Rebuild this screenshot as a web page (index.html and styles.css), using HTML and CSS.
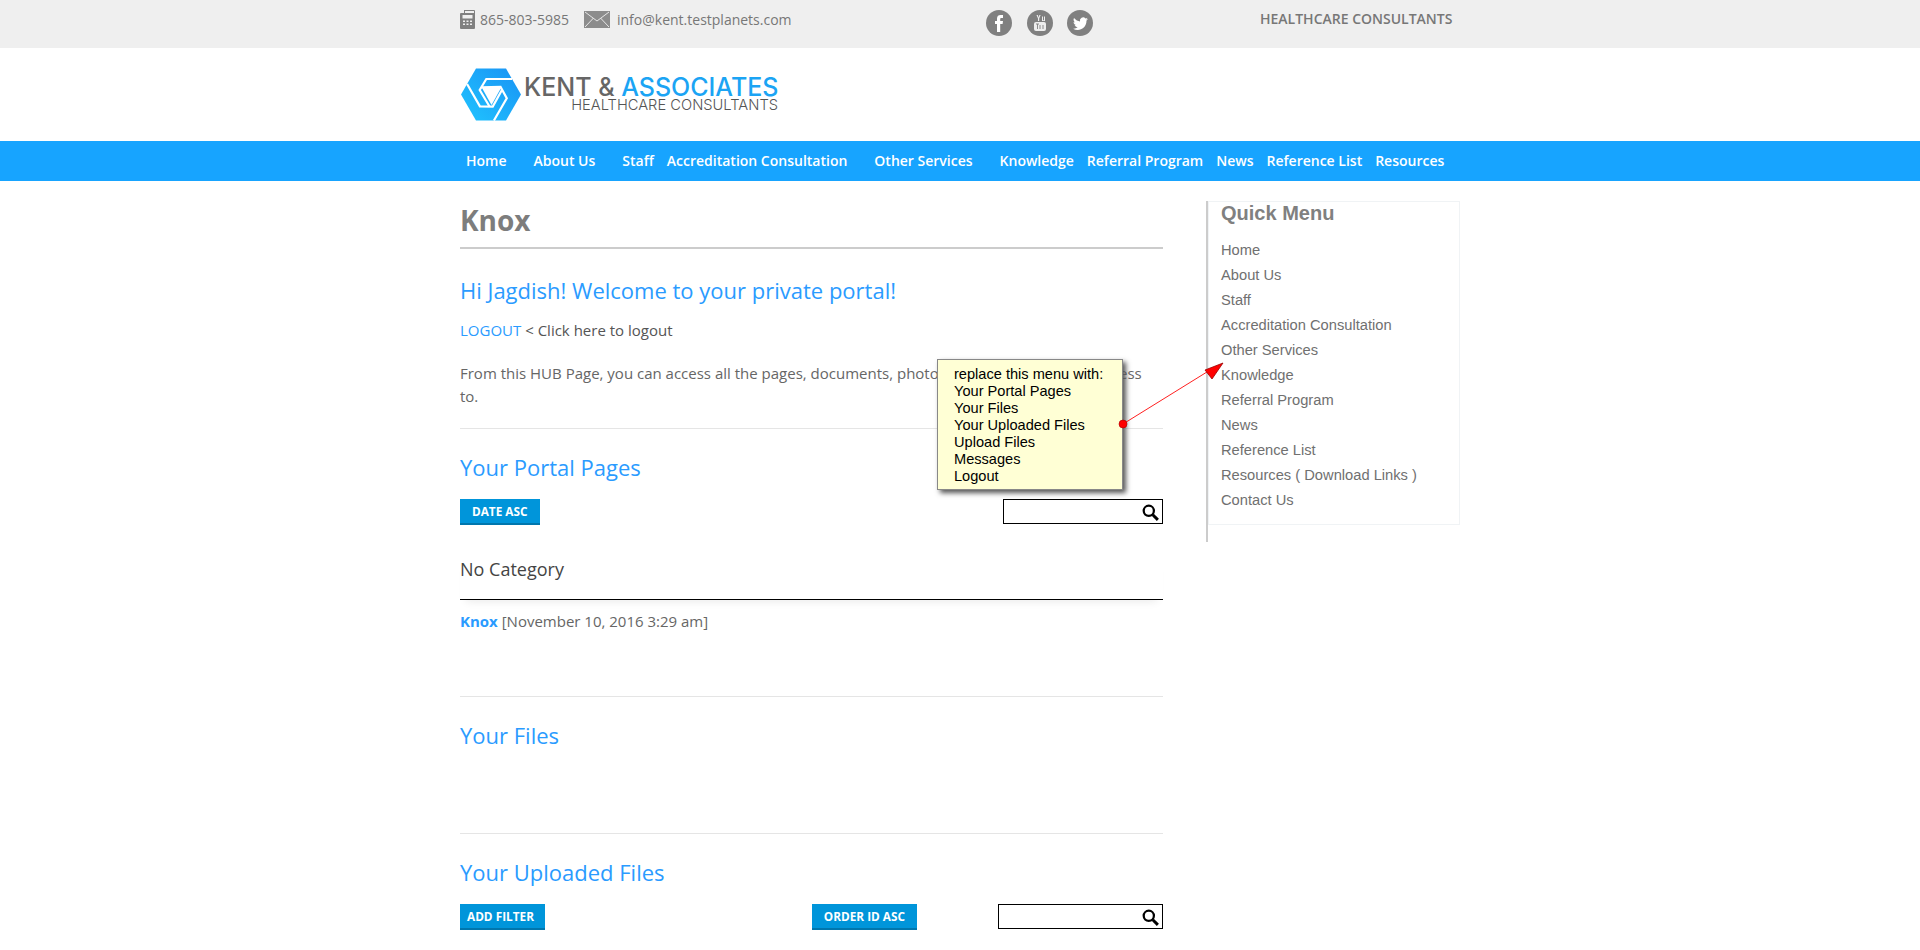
FILE: index.html
```html
<!DOCTYPE html>
<html lang="en">
<head>
<meta charset="utf-8">
<title>Knox - Kent &amp; Associates</title>
<link rel="stylesheet" href="styles.css">
</head>
<body>
<header class="topbar">
  <div class="wrap topbar-in">
    <div class="contact">
      <svg class="ic-phone" viewBox="0 0 15 19"><path fill="#808080" fill-rule="evenodd" d="M1 3h3V0h10a1 1 0 0 1 1 1v17a1 1 0 0 1-1 1H1a1 1 0 0 1-1-1V4a1 1 0 0 1 1-1zM5 1v2h9V1zM2.500 5v3.500h10V5zM3 10.500v1.500h2v-1.500zM6.500 10.500v1.500h2v-1.500zM10 10.500v1.500h2v-1.500zM3 13.500v1.500h2v-1.500zM6.500 13.500v1.500h2v-1.500zM10 13.500v1.500h2v-1.500z"/></svg>
      <span class="phone">865-803-5985</span>
      <svg class="ic-mail" viewBox="0 0 26 17"><rect width="26" height="17" fill="#8c8c8c"/><path d="M1 1l12 9 12-9M1 16l8.500-9M25 16l-8.500-9" fill="none" stroke="#e6e6e6" stroke-width="1"/></svg>
      <span class="mail">info@kent.testplanets.com</span>
    </div>
    <div class="social">
      <span class="soc"><svg viewBox="0 0 26 26"><circle cx="13" cy="13" r="13" fill="#808080"/><path fill="#fff" d="M11 22v-8H9v-3h2V8.500C11 6 12.500 5 14.500 5H17v3h-1.500c-1 0-1.300.4-1.300 1.200V11H17l-.4 3h-2.400v8z"/></svg></span>
      <span class="soc"><svg viewBox="0 0 26 26"><circle cx="13" cy="13" r="13" fill="#808080"/><path fill="#eee" d="M9.500 5h1.300l.8 2.500.8-2.500h1.200l-1.400 3.500V11h-1.200V8.500zM15 6.500h1v3.700h1v-3.700h1V11h-3z"/><rect x="7" y="12" width="12" height="9" rx="2" fill="#eee"/><path d="M9 14h3M10.500 14v5M13 15v4M16 15v4" stroke="#808080" stroke-width=".9"/></svg></span>
      <span class="soc"><svg viewBox="0 0 26 26"><circle cx="13" cy="13" r="13" fill="#808080"/><path fill="#fff" d="M21 9c-.6.300-1.200.4-1.900.5.700-.4 1.200-1 1.400-1.800-.6.400-1.300.7-2 .8a3.200 3.200 0 0 0-5.500 2.900C11 11.300 8.600 10 7 8c-.9 1.500-.4 3.400 1 4.300-.5 0-1-.1-1.400-.4 0 1.600 1.100 2.900 2.500 3.200-.5.100-1 .1-1.400 0 .4 1.300 1.600 2.200 3 2.200A6.400 6.400 0 0 1 6 18.700c5.500 3.100 13.500.4 13.500-8.100 0-.2 1-.8 1.500-1.600z"/></svg></span>
    </div>
    <div class="tagline">HEALTHCARE CONSULTANTS</div>
  </div>
</header>

<div class="brand">
  <div class="wrap brand-in">
    <svg class="logo-mark" viewBox="0 0 60 53">
      <defs>
        <linearGradient id="lg" x1="0" y1="1" x2="1" y2="0"><stop offset="0" stop-color="#1fc4ff"/><stop offset="1" stop-color="#1a92f4"/></linearGradient>
        <path id="swirl" d="M51 11H25.300L18.700 22l10 16.700" fill="none" stroke="#fff" stroke-width="2.200"/>
      </defs>
      <path fill="url(#lg)" d="M15 .5h30l15 26-15 26H15L0 26.500z"/>
      <path fill="#fff" d="M21 20h19l-9.500 17z"/>
      <use href="#swirl"/>
      <use href="#swirl" transform="rotate(120 30 26.500)"/>
      <use href="#swirl" transform="rotate(240 30 26.500)"/>
    </svg>
    <div class="logo-text">
      <div class="logo-name">KENT &amp; <span class="logo-accent">ASSOCIATES</span></div>
      <div class="logo-sub">HEALTHCARE CONSULTANTS</div>
    </div>
  </div>
</div>

<nav class="nav">
  <div class="wrap nav-in">
    <a class="nav-link wide">Home</a>
    <a class="nav-link wide">About Us</a>
    <a class="nav-link">Staff</a>
    <a class="nav-link wide">Accreditation Consultation</a>
    <a class="nav-link wide">Other Services</a>
    <a class="nav-link">Knowledge</a>
    <a class="nav-link">Referral Program</a>
    <a class="nav-link">News</a>
    <a class="nav-link">Reference List</a>
    <a class="nav-link">Resources</a>
  </div>
</nav>

<div class="wrap page">
  <main class="main">
    <h1 class="title">Knox</h1>
    <h2 class="welcome">Hi Jagdish! Welcome to your private portal!</h2>
    <p class="logout"><a class="link">LOGOUT</a> &lt; Click here to logout</p>
    <p class="intro">From this HUB Page, you can access all the pages, documents, photos and videos you have access to.</p>

    <section class="sec sec-pages">
      <h3 class="sec-title">Your Portal Pages</h3>
      <div class="tools">
        <a class="btn">DATE ASC</a>
        <div class="search s160"><svg class="mag" viewBox="0 0 15 15"><circle cx="6" cy="6" r="4.500" fill="none" stroke="#000" stroke-width="2"/><path d="M9.500 9.500L14 14" stroke="#000" stroke-width="2.600"/></svg></div>
      </div>
      <div class="cat">No Category</div>
      <p class="item"><a class="link strong">Knox</a> [November 10, 2016 3:29 am]</p>
    </section>

    <section class="sec sec-files">
      <h3 class="sec-title">Your Files</h3>
    </section>

    <section class="sec sec-up">
      <h3 class="sec-title">Your Uploaded Files</h3>
      <div class="tools">
        <a class="btn btn-add">ADD FILTER</a>
        <a class="btn push">ORDER ID ASC</a>
        <div class="search s165"><svg class="mag" viewBox="0 0 15 15"><circle cx="6" cy="6" r="4.500" fill="none" stroke="#000" stroke-width="2"/><path d="M9.500 9.500L14 14" stroke="#000" stroke-width="2.600"/></svg></div>
      </div>
    </section>
  </main>

  <aside class="side">
    <div class="side-box">
      <h4 class="side-title">Quick Menu</h4>
      <ul class="side-list">
        <li>Home</li>
        <li>About Us</li>
        <li>Staff</li>
        <li>Accreditation Consultation</li>
        <li>Other Services</li>
        <li>Knowledge</li>
        <li>Referral Program</li>
        <li>News</li>
        <li>Reference List</li>
        <li>Resources ( Download Links )</li>
        <li>Contact Us</li>
      </ul>
    </div>
  </aside>

  <div class="note">replace this menu with:<br>Your Portal Pages<br>Your Files<br>Your Uploaded Files<br>Upload Files<br>Messages<br>Logout</div>
  <svg class="arrow" viewBox="0 0 110 80">
    <path d="M3 69L95 12" stroke="#ff2020" stroke-width="1" fill="none"/>
    <circle cx="3" cy="69" r="4" fill="#f00" stroke="#a00" stroke-width=".6"/>
    <path d="M103 8L85 15l7 9z" fill="#f00" stroke="#900" stroke-width=".8"/>
  </svg>
</div>
</body>
</html>
```

FILE: styles.css
```css
* { box-sizing: border-box; }
html, body { margin: 0; padding: 0; height: 950px; overflow: hidden; }
body { background: #fff; font-family: "Open Sans", sans-serif; color: #555; font-size: 14px; }
.wrap { width: 1000px; margin: 0 auto; }

.topbar { height: 48px; background: #efefef; }
.topbar-in { display: flex; align-items: flex-start; }
.contact { display: flex; align-items: center; width: 526px; height: 39px; color: #777; }
.ic-phone { width: 15px; height: 19px; margin-right: 5px; margin-top: -1px; }
.phone { width: 89px; font-size: 14px; white-space: nowrap; }
.ic-mail { width: 26px; height: 17px; margin: 0 7px 0 15px; }
.mail { font-size: 14px; white-space: nowrap; }
.social { display: flex; gap: 14.500px; padding-top: 10px; width: 274px; }
.soc { display: block; width: 26px; height: 26px; }
.soc svg { display: block; width: 26px; height: 26px; }
.tagline { font-weight: 600; font-size: 14px; color: #777; padding-top: 9px; white-space: nowrap; }

.brand { height: 93px; }
.brand-in { display: flex; padding: 20px 0 0 1px; }
.logo-mark { width: 60px; height: 53px; flex: none; }
.logo-text { margin-left: 3px; width: 254px; padding-top: 6px; }
.logo-name { font-family: Inter, sans-serif; font-weight: 500; font-size: 25px; line-height: 27px; color: #666; white-space: nowrap; }
.logo-accent { color: #1ba4f4; }
.logo-sub { margin-top: -2px; font-family: Inter, sans-serif; font-weight: 300; font-size: 14.700px; line-height: 13px; color: #555; text-align: right; white-space: nowrap; }

.nav { height: 40px; background: #17a4ff; }
.nav-in { display: flex; gap: 13px; padding: 0 0 2px 6px; align-items: center; height: 40px; }
.nav-link { color: #fff; font-weight: 600; font-size: 14px; white-space: nowrap; }
.wide { margin-right: 14px; }

.page { display: flex; position: relative; align-items: flex-start; }
.main { width: 703px; flex: none; }
.title { margin: 0; padding: 20px 0 0; height: 68px; border-bottom: 2px solid #ccc; font-size: 28px; line-height: 38px; font-weight: 700; color: #7d7d7d; }
.welcome { margin: 26px 0 0; font-size: 22px; line-height: 30px; font-weight: 400; color: #2a9bff; }
.logout { margin: 14px 0 0; font-size: 15px; line-height: 23px; color: #555; }
.link { color: #2a9bff; }
.strong { font-weight: 700; }
.intro { margin: 20px 0 0; font-size: 15px; line-height: 23px; padding-right: 10px; color: #666; }
.sec { border-top: 1px solid #e5e5e5; }
.sec-pages { margin-top: 20px; height: 268px; }
.sec-files { height: 137px; }
.sec-title { margin: 23px 0 0; font-size: 22px; line-height: 30px; font-weight: 400; color: #2a9bff; }
.tools { display: flex; align-items: flex-start; justify-content: space-between; margin-top: 17px; }
.sec-up .tools { justify-content: flex-start; }
.btn { display: block; height: 26px; padding: 0 12px; background: #0095da; border-bottom: 2px solid #0076ad; color: #fff; font-weight: 700; font-size: 11.800px; line-height: 24px; white-space: nowrap; }
.btn-add { padding: 0 11px 0 7px; }
.push { margin-left: auto; margin-right: 81px; }
.search { position: relative; height: 25px; border: 1px solid #000; background: #fff; }
.s160 { width: 160px; }
.s165 { width: 165px; }
.mag { position: absolute; right: 3px; top: 4px; width: 17px; height: 17px; }
.cat { margin-top: 29px; height: 46px; padding-top: 2px; font-size: 18px; line-height: 26px; color: #444; border-bottom: 1px solid #000; box-shadow: 0 8px 8px -6px rgba(0,0,0,.08); }
.item { margin: 11px 0 0; font-size: 15px; line-height: 20px; color: #666; }

.side { width: 254px; margin-left: 43px; margin-top: 20px; height: 341px; border-left: 2px solid #ccc; }
.side-box { height: 324px; border: 1px solid #f0f3f5; padding: 0 0 0 12px; }
.side-title { margin: 0; font-family: "Liberation Sans", Arial, sans-serif; font-size: 20px; line-height: 22px; font-weight: 700; color: #808080; }
.side-list { list-style: none; margin: 14px 0 0; padding: 0; font-family: "Liberation Sans", Arial, sans-serif; font-size: 14.700px; line-height: 25px; color: #707070; }

.note { position: absolute; left: 477px; top: 178px; width: 186px; height: 131px; padding: 6px 0 0 16px; background: #ffffd5; border: 1px solid #888; box-shadow: 3px 3px 5px #555; font-family: "Liberation Sans", Arial, sans-serif; font-size: 14.600px; line-height: 17px; color: #000; white-space: nowrap; }
.arrow { position: absolute; left: 660px; top: 174px; width: 110px; height: 80px; overflow: visible; }
```
